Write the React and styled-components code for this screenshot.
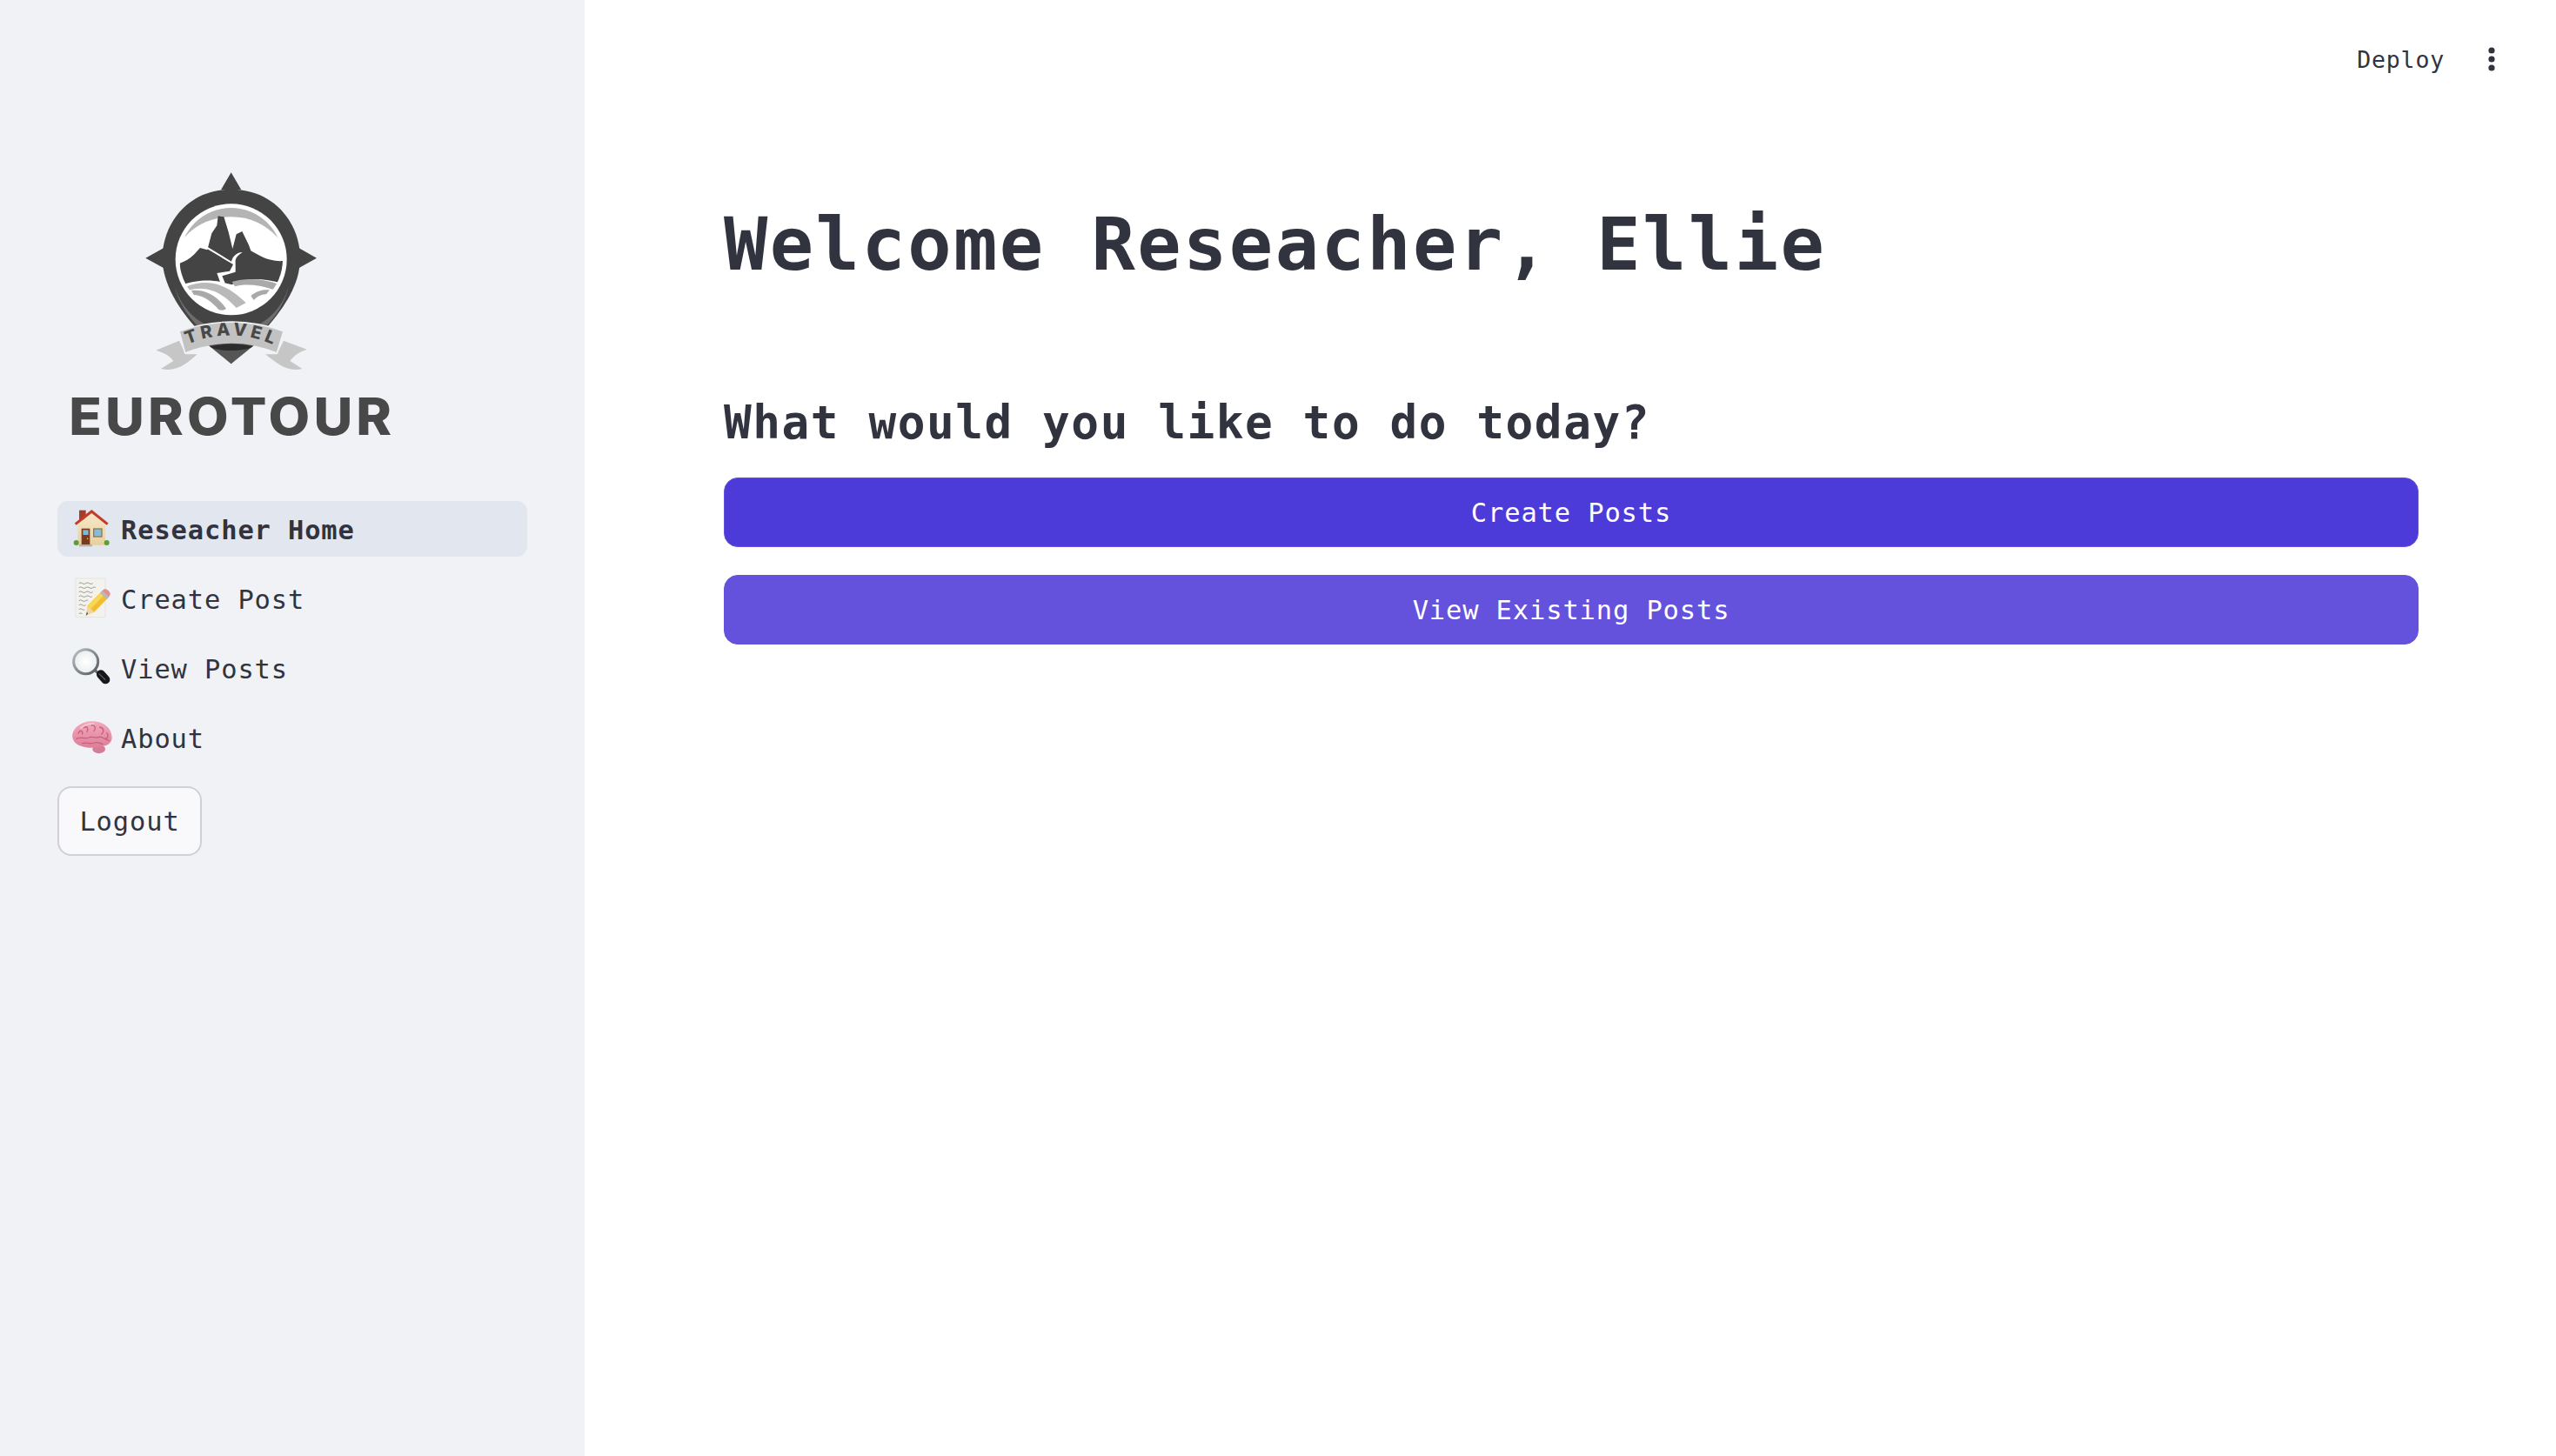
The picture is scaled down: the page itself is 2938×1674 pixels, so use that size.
import React from "react";
import styled, { createGlobalStyle } from "styled-components";

const MONO = `"DejaVu Sans Mono", "Liberation Mono", monospace`;

const Global = createGlobalStyle`
  html, body { margin: 0; padding: 0; background: #fff; }
  * { box-sizing: border-box; }
`;

const Page = styled.div`
  display: flex;
  width: 100%;
  height: 100vh;
  overflow: hidden;
  font-family: ${MONO};
  color: #31333f;
`;

const Sidebar = styled.aside`
  flex: 0 0 672px;
  background: #f0f2f6;
  padding: 170px 66px 0;
  display: flex;
  flex-direction: column;
`;

const LogoWrap = styled.div`
  width: 460px;
  height: 360px;
  margin-left: -26px;
  margin-bottom: 46px;
`;

const Nav = styled.nav`
  display: flex;
  flex-direction: column;
  gap: 16px;
  width: 540px;
`;

const NavItem = styled.a`
  display: flex;
  align-items: center;
  gap: 3px;
  height: 64px;
  padding: 0 0 0 10px;
  border-radius: 12px;
  font-size: 30.4px;
  letter-spacing: 0.0296em;
  font-weight: ${(p) => (p.$active ? 700 : 400)};
  background: ${(p) => (p.$active ? "#e2e6ee" : "transparent")};
`;

const NavLabel = styled.span`
  padding-top: 2px;
`;

const EmojiBox = styled.svg`
  flex: 0 0 60px;
  width: 60px;
  height: 60px;
`;

const LogoutButton = styled.button`
  align-self: flex-start;
  margin-top: 24px;
  width: 166px;
  height: 80px;
  padding: 0;
  border: 2px solid #d0d0d6;
  border-radius: 16px;
  background: #f9f9fb;
  color: #31333f;
  font-family: ${MONO};
  font-size: 30.4px;
  letter-spacing: 0.0296em;
`;

const Main = styled.main`
  flex: 1;
  min-width: 0;
  display: flex;
  flex-direction: column;
`;

const Toolbar = styled.header`
  display: flex;
  justify-content: flex-end;
  align-items: center;
  gap: 48px;
  height: 136px;
  padding-right: 68px;
  flex: 0 0 auto;
`;

const DeployLink = styled.span`
  font-size: 26.6px;
  letter-spacing: 0.0296em;
`;

const Kebab = styled.svg`
  width: 12px;
  height: 34px;
`;

const Content = styled.div`
  padding: 95px 158px 0 160px;
  display: flex;
  flex-direction: column;
`;

const Title = styled.h1`
  margin: 0;
  font-size: 83.6px;
  line-height: 100px;
  font-weight: 700;
  letter-spacing: 0.0296em;
`;

const Subtitle = styled.h2`
  margin: 117px 0 0;
  font-size: 52.7px;
  line-height: 76px;
  font-weight: 700;
  letter-spacing: 0.0296em;
`;

const ActionStack = styled.div`
  display: flex;
  flex-direction: column;
  gap: 32px;
  margin-top: 25px;
`;

const ActionButton = styled.button`
  height: 80px;
  padding: 0;
  border: 1px solid #6451dc;
  border-radius: 16px;
  background: ${(p) => p.$bg};
  color: #fff;
  font-family: ${MONO};
  font-size: 30.4px;
  letter-spacing: 0.0296em;
`;

const Logo = () => (
  <svg width="460" height="360" viewBox="0 0 1380 1080">
    <defs>
      <clipPath id="lens">
        <circle cx="677" cy="385" r="178" />
      </clipPath>
    </defs>
    <path d="M677 85 L712 145 L642 145 Z M382 380 L445 345 L445 415 Z M972 380 L910 345 L910 415 Z" fill="#444" />
    <path d="M677 143 C525 143 440 265 440 380 C440 470 500 560 560 625 L677 745 L800 620 C860 550 915 470 915 380 C915 265 830 143 677 143 Z" fill="#444" />
    <path d="M483 480 C510 560 560 600 620 625 L600 650 C550 610 500 550 483 480 Z M875 480 C850 560 800 600 740 625 L760 650 C810 610 860 550 875 480 Z" fill="#6d6d6d" />
    <circle cx="677" cy="385" r="192" fill="#fff" />
    <g clipPath="url(#lens)">
      <path d="M500 330 C530 250 610 205 677 205 C745 205 820 250 855 330 C805 265 745 238 677 238 C610 238 545 265 500 330 Z" fill="#b4b4b4" />
      <path d="M500 398 C540 385 555 360 570 345 L595 352 L610 295 L628 268 L632 235 L652 238 L668 290 L682 348 L695 298 L715 288 L738 335 L745 355 C770 368 805 395 860 390 L860 470 C780 445 720 450 680 472 L640 462 C600 455 560 455 500 475 Z" fill="#444" />
      <path d="M590 346 L684 402 L672 425 L628 432 L640 466 L656 466 L646 442 L692 428 L692 395 C690 380 702 370 716 360 C696 360 682 375 678 392 L596 342 Z" fill="#fff" />
      <path d="M520 480 C590 450 660 465 728 535 L695 552 C650 500 590 472 530 492 Z" fill="#b9b9b9" />
      <path d="M540 492 C590 487 630 512 660 555 L640 565 C610 527 575 507 548 507 Z M680 462 C730 447 790 452 840 470 L820 488 C775 473 725 468 690 478 Z M745 510 C770 490 790 488 810 490 L798 505 C780 505 765 515 755 525 Z" fill="#a9a9a9" />
    </g>
    <path d="M498 665 L418 698 C440 705 465 715 478 735 L435 762 C490 775 530 740 560 712 L520 712 Z M858 665 L938 695 C910 705 895 715 880 735 L922 762 C870 775 830 740 795 712 L835 712 Z" fill="#c6c6c6" />
    <path d="M498 632 C620 590 740 590 858 632 L835 708 C740 668 620 668 518 708 Z" fill="#c2c2c2" stroke="#f0f2f6" strokeWidth="5" />
    <path d="M600 682 C650 672 705 672 755 682 L677 745 Z" fill="#555" />
    <path d="M603 685 C650 674 705 674 752 685 C730 704 625 704 603 685 Z" fill="#2c2c2c" />
    <path id="ribbonCurve" d="M526 678 C620 636 730 636 828 682" fill="none" />
    <text fontFamily="Inter, sans-serif" fontWeight="800" fontSize="60" fill="#484848" letterSpacing="13">
      <textPath href="#ribbonCurve" startOffset="0">TRAVEL</textPath>
    </text>
    <text x="118" y="990" textLength="1125" lengthAdjust="spacingAndGlyphs" fontFamily="Inter, sans-serif" fontWeight="800" fontSize="178" letterSpacing="12" fill="#484848">EUROTOUR</text>
  </svg>
);

const HouseIcon = () => (
  <EmojiBox viewBox="0 -6 180 180">
    <defs>
      <linearGradient id="wall" x1="0" y1="0" x2="0" y2="1">
        <stop offset="0" stopColor="#f7e9c8" />
        <stop offset="1" stopColor="#e6d09f" />
      </linearGradient>
    </defs>
    <rect x="45" y="20" width="23" height="35" fill="#a83c2a" />
    <path d="M40 68 L88 28 L135 68 V140 H40 Z" fill="url(#wall)" />
    <path d="M32 68 L88 24 L143 68" fill="none" stroke="#c33b2a" strokeWidth="9" />
    <rect x="53" y="83" width="29" height="57" fill="#7c3a1d" />
    <rect x="58" y="88" width="19" height="17" fill="#7fb6dc" />
    <circle cx="74" cy="118" r="2.5" fill="#e8c15a" />
    <rect x="93" y="82" width="32" height="31" fill="#8c7a55" />
    <rect x="97" y="86" width="24" height="23" fill="#86bbe0" />
    <rect x="45" y="138" width="45" height="7" fill="#b8b0a0" />
    <circle cx="35" cy="132" r="9" fill="#5f9e36" />
    <circle cx="140" cy="132" r="9" fill="#5f9e36" />
  </EmojiBox>
);

const MemoIcon = () => (
  <EmojiBox viewBox="0 -6 180 180">
    <rect x="33" y="15" width="102" height="133" fill="#f3f2ec" stroke="#dededa" strokeWidth="2" />
    <path
      d="M44 32 q6 -5 12 0 t12 0 t12 0 t12 0 M44 47 q6 -5 12 0 t12 0 t12 0 t12 0 t10 0 M44 62 q6 -5 12 0 t12 0 t12 0 t12 0 M44 77 q6 -5 12 0 t12 0 t12 0 t10 0 M44 92 q6 -5 12 0 t12 0 t8 0 M44 107 q6 -5 12 0 t12 0 M44 122 q6 -5 12 0 t8 0 M44 137 q6 -5 12 0"
      fill="none"
      stroke="#6f6f72"
      strokeWidth="2"
    />
    <path d="M120 62 L143 84 L96 132 L73 110 Z" fill="#f2bd2f" />
    <path d="M120 62 L131 73 L85 121 L73 110 Z" fill="#f8d657" />
    <path d="M73 110 L96 132 L68 144 Z" fill="#f0d5a6" />
    <path d="M75 137 L68 144 L72 130 Z" fill="#444" />
    <path d="M120 62 L128 54 C136 48 146 56 151 64 C154 72 150 76 143 84 Z" fill="#e78d8a" />
    <path d="M117 65 L125 57 L148 79 L140 87 Z" fill="#b9b9b6" />
  </EmojiBox>
);

const GlassIcon = () => (
  <EmojiBox viewBox="0 -6 180 180">
    <defs>
      <linearGradient id="ring" x1="0" y1="0" x2="1" y2="1">
        <stop offset="0" stopColor="#b9c0c4" />
        <stop offset="1" stopColor="#55595c" />
      </linearGradient>
      <radialGradient id="lensFill">
        <stop offset="0" stopColor="#ffffff" />
        <stop offset="1" stopColor="#e9edef" />
      </radialGradient>
    </defs>
    <path d="M100 92 L120 112" stroke="#66696c" strokeWidth="10" />
    <circle cx="68" cy="62" r="42" fill="url(#lensFill)" stroke="url(#ring)" strokeWidth="9" />
    <path d="M120 106 L136 124" stroke="#18181b" strokeWidth="30" strokeLinecap="round" />
    <path d="M114 104 L134 124" stroke="#55575a" strokeWidth="4" strokeLinecap="round" />
  </EmojiBox>
);

const BrainIcon = () => (
  <EmojiBox viewBox="0 -6 180 180">
    <defs>
      <linearGradient id="brainFill" x1="0" y1="0" x2="0" y2="1">
        <stop offset="0" stopColor="#f2a9bb" />
        <stop offset="1" stopColor="#dd7f99" />
      </linearGradient>
    </defs>
    <ellipse cx="113" cy="124" rx="22" ry="15" fill="#d67d95" />
    <path d="M22 84 C18 55 48 30 85 28 C125 26 156 48 158 82 C159 100 146 112 128 113 C100 118 84 122 62 116 C40 112 26 102 22 84 Z" fill="url(#brainFill)" />
    <g fill="none" stroke="#c7607f" strokeWidth="4" strokeLinecap="round">
      <path d="M42 70 C48 55 58 60 56 72 M62 50 C72 42 78 52 72 64 M88 42 C100 40 104 52 96 62 M116 48 C130 50 132 64 122 72 M140 68 C148 76 144 88 134 88" />
      <path d="M36 88 C50 80 64 90 78 84 C90 78 102 88 114 82 C124 78 134 92 148 94" />
      <path d="M56 104 C70 98 84 108 98 102 C106 98 116 104 126 106" />
    </g>
    <path d="M50 52 C60 40 80 36 96 36" fill="none" stroke="#f9cfd9" strokeWidth="4" strokeLinecap="round" />
  </EmojiBox>
);

const NAV = [
  { label: "Reseacher Home", Icon: HouseIcon, active: true },
  { label: "Create Post", Icon: MemoIcon },
  { label: "View Posts", Icon: GlassIcon },
  { label: "About", Icon: BrainIcon },
];

export default function App() {
  return (
    <>
      <Global />
      <Page>
        <Sidebar>
          <LogoWrap>
            <Logo />
          </LogoWrap>
          <Nav>
            {NAV.map(({ label, Icon, active }) => (
              <NavItem key={label} $active={active}>
                <Icon />
                <NavLabel>{label}</NavLabel>
              </NavItem>
            ))}
          </Nav>
          <LogoutButton>Logout</LogoutButton>
        </Sidebar>
        <Main>
          <Toolbar>
            <DeployLink>Deploy</DeployLink>
            <Kebab viewBox="0 0 12 34">
              <circle cx="6" cy="7" r="3.6" fill="#31333f" />
              <circle cx="6" cy="17" r="3.6" fill="#31333f" />
              <circle cx="6" cy="27" r="3.6" fill="#31333f" />
            </Kebab>
          </Toolbar>
          <Content>
            <Title>Welcome Reseacher, Ellie</Title>
            <Subtitle>What would you like to do today?</Subtitle>
            <ActionStack>
              <ActionButton $bg="#4d3bd9">Create Posts</ActionButton>
              <ActionButton $bg="#6451dc">View Existing Posts</ActionButton>
            </ActionStack>
          </Content>
        </Main>
      </Page>
    </>
  );
}
